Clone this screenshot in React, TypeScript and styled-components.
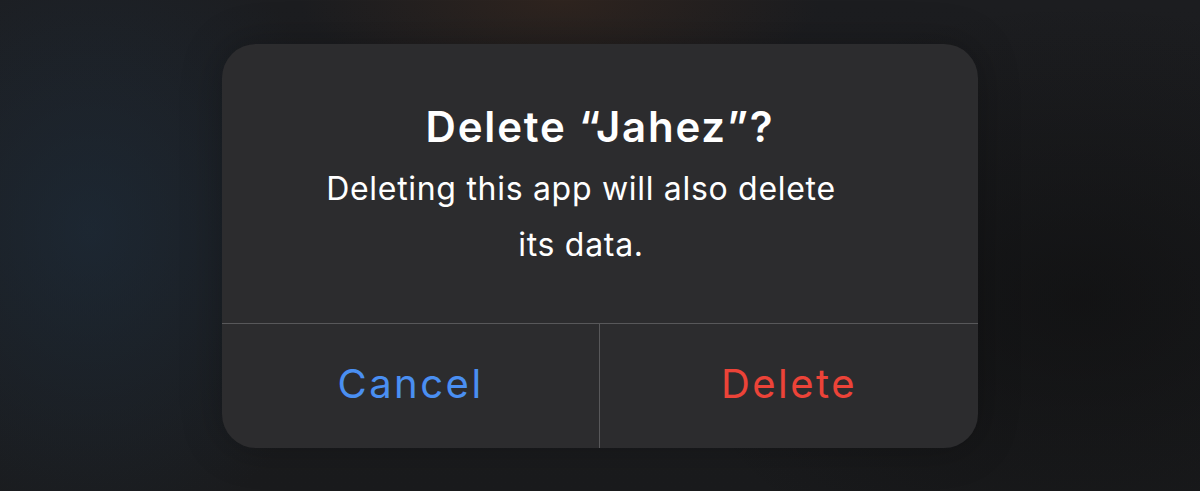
import React from "react";
import styled, { createGlobalStyle } from "styled-components";

const Global = createGlobalStyle`
  html, body { margin: 0; padding: 0; }
  body {
    width: 1200px;
    height: 491px;
    overflow: hidden;
    background: #1b1c1f;
    font-family: Inter, "Noto Sans", "Liberation Sans", sans-serif;
    -webkit-font-smoothing: antialiased;
  }
`;

const Backdrop = styled.div`
  width: 1200px;
  height: 491px;
  display: flex;
  align-items: center;
  justify-content: center;
  background:
    radial-gradient(ellipse 260px 90px at 560px 0px, rgba(70, 45, 30, 0.45), transparent),
    radial-gradient(ellipse 260px 320px at 90px 230px, rgba(30, 48, 66, 0.55), transparent),
    radial-gradient(ellipse 420px 300px at 1080px 300px, rgba(10, 10, 10, 0.5), transparent),
    linear-gradient(180deg, #1c1d20 0%, #1a1b1d 100%);
`;

const Dialog = styled.div`
  width: 756px;
  height: 404px;
  border-radius: 34px;
  background: #2c2c2e;
  display: flex;
  flex-direction: column;
  overflow: hidden;
  box-shadow: 0 0 40px rgba(0, 0, 0, 0.25);
`;

const Message = styled.div`
  height: 280px;
  box-sizing: border-box;
  padding-top: 58px;
  display: flex;
  flex-direction: column;
  align-items: center;
  border-bottom: 1px solid #58585a;
`;

const Title = styled.div`
  color: #ffffff;
  font-size: 42px;
  font-weight: 600;
  line-height: 50px;
  letter-spacing: 1.8px;
`;

const Body = styled.div`
  margin-top: 9px;
  margin-right: 38px;
  width: 540px;
  color: #ffffff;
  font-size: 32px;
  font-weight: 400;
  line-height: 56px;
  text-align: center;
  letter-spacing: 0.7px;
`;

const Actions = styled.div`
  flex: 1;
  display: grid;
  grid-template-columns: 378px 1fr;
`;

const Action = styled.button<{ $tone: "blue" | "red"; $divider?: boolean }>`
  appearance: none;
  border: none;
  background: transparent;
  margin: 0;
  padding: 0 0 4px 0;
  display: flex;
  align-items: center;
  justify-content: center;
  font-family: inherit;
  font-size: 40px;
  font-weight: 400;
  letter-spacing: 2.5px;
  color: ${(p) => (p.$tone === "blue" ? "#4a8ff2" : "#ec4338")};
  border-right: ${(p) => (p.$divider ? "1px solid #58585a" : "none")};
  cursor: pointer;
`;

export default function App() {
  return (
    <>
      <Global />
      <Backdrop>
        <Dialog>
          <Message>
            <Title>Delete “Jahez”?</Title>
            <Body>Deleting this app will also delete its data.</Body>
          </Message>
          <Actions>
            <Action $tone="blue" $divider>Cancel</Action>
            <Action $tone="red">Delete</Action>
          </Actions>
        </Dialog>
      </Backdrop>
    </>
  );
}
